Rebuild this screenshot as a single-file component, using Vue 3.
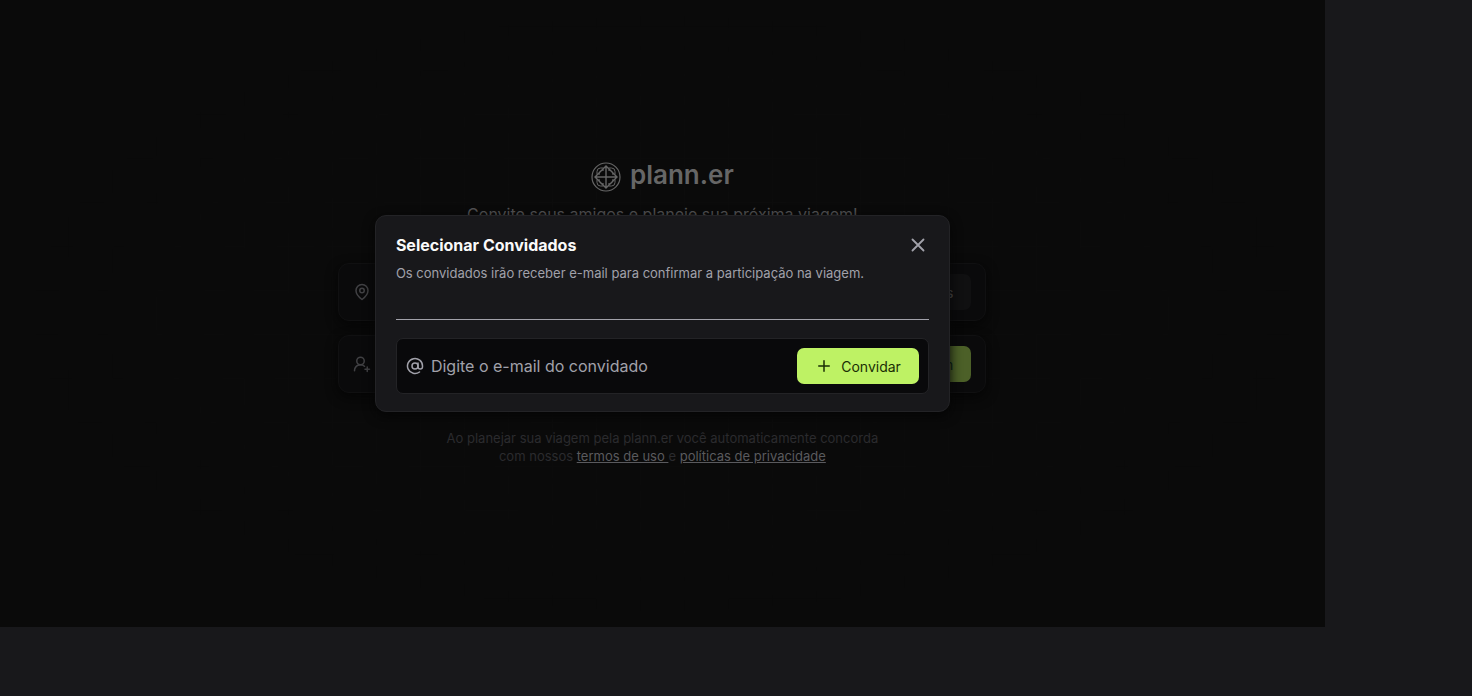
<script setup>
import { ref } from 'vue'

const email = ref('')
const logoAngles = [0, 90, 180, 270]
</script>

<template>
  <div class="screen">
    <div class="frame">
      <main class="page">
        <header class="intro">
          <div class="brand">
            <svg class="brand-mark" viewBox="0 0 30 30" fill="none" stroke="currentColor" aria-hidden="true">
              <circle cx="15" cy="15" r="14" stroke-width="1.2" />
              <path d="M15 4 26 15 15 26 4 15ZM15 4v22M4 15h22" stroke-width="1.4" />
              <path
                v-for="angle in logoAngles"
                :key="angle"
                d="M6 12.5V9.5Q6 6 9.5 6h3M8 13Q8 8 13 8"
                :transform="`rotate(${angle} 15 15)`"
              />
            </svg>
            <span class="brand-name">plann.er</span>
          </div>
          <p class="tagline">Convite seus amigos e planeje sua próxima viagem!</p>
        </header>

        <div class="steps">
          <div class="step">
            <svg class="icon" viewBox="0 0 24 24" aria-hidden="true">
              <path d="M20 10c0 6-8 12-8 12s-8-6-8-12a8 8 0 0 1 16 0Z" />
              <circle cx="12" cy="10" r="3" />
            </svg>
            <button class="step-button" type="button" tabindex="-1">Alterar local/datas</button>
          </div>
          <div class="step">
            <svg class="icon" viewBox="0 0 24 24" aria-hidden="true">
              <path d="M2 21a8 8 0 0 1 13.3-6" />
              <circle cx="10" cy="8" r="5" />
              <path d="M19 16v6M22 19h-6" />
            </svg>
            <button class="step-button confirm" type="button" tabindex="-1">Confirmar viagem</button>
          </div>
        </div>

        <p class="legal">
          Ao planejar sua viagem pela plann.er você automaticamente concorda<br />
          com nossos <a href="#termos">termos de uso&nbsp;</a>e <a href="#privacidade">políticas de privacidade</a>
        </p>
      </main>

      <div class="overlay">
        <section class="modal" role="dialog" aria-modal="true" aria-labelledby="guests-title">
          <div class="modal-head">
            <h2 id="guests-title">Selecionar Convidados</h2>
            <button class="close" type="button" aria-label="Fechar">
              <svg class="icon" viewBox="0 0 24 24" aria-hidden="true"><path d="M18 6 6 18M6 6l12 12" /></svg>
            </button>
          </div>
          <p class="hint">Os convidados irão receber e-mail para confirmar a participação na viagem.</p>
          <hr class="divider" />
          <form class="invite" @submit.prevent>
            <label for="guest-email" aria-label="E-mail do convidado">
              <svg class="icon" viewBox="0 0 24 24" aria-hidden="true">
                <circle cx="12" cy="12" r="4" />
                <path d="M16 8v5a3 3 0 0 0 6 0v-1a10 10 0 1 0-4 8" />
              </svg>
            </label>
            <input id="guest-email" v-model="email" type="email" placeholder="Digite o e-mail do convidado" />
            <button class="invite-button" type="submit">
              <svg class="icon" viewBox="0 0 24 24" aria-hidden="true"><path d="M5 12h14M12 5v14" /></svg>
              Convidar
            </button>
          </form>
        </section>
      </div>
    </div>
  </div>
</template>

<style>
body {
  background: #18181b;
}
</style>

<style scoped>
.screen {
  min-height: 100vh;
  font-family: Inter, "Liberation Sans", sans-serif;
  color: #a1a1aa;
}

.screen * {
  box-sizing: border-box;
}

.frame {
  position: relative;
  display: flex;
  align-items: center;
  justify-content: center;
  width: 90vw;
  min-height: calc(90vh + 1px);
  background: #0a0a0a;
}

.frame::before {
  content: "";
  position: absolute;
  inset: 0;
  background:
    linear-gradient(90deg, #0d0d0d 1px, transparent 1px) 24px 0 / 44px 44px,
    linear-gradient(#0d0d0d 1px, transparent 1px) 0 26px / 44px 44px;
  mask-image: radial-gradient(closest-side, #000, transparent 95%);
}

p,
h2 {
  margin: 0;
}

button,
input {
  border: 0;
  font: inherit;
}

.icon {
  display: block;
  width: 18px;
  height: 18px;
  flex: none;
  fill: none;
  stroke: currentColor;
  stroke-width: 2;
  stroke-linecap: round;
  stroke-linejoin: round;
}

.page {
  position: relative;
  display: flex;
  flex-direction: column;
  gap: 36px;
  width: 100%;
  max-width: 648px;
  padding-bottom: 4px;
  text-align: center;
}

.intro {
  display: flex;
  flex-direction: column;
  align-items: center;
  gap: 10px;
}

.brand {
  display: flex;
  align-items: flex-end;
  gap: 9px;
  color: #666;
}

.brand-mark {
  width: 30px;
  height: 30px;
}

.brand-name {
  font-size: 26px;
  font-weight: 600;
  line-height: 34px;
}

.tagline {
  font-size: 16px;
  line-height: 25px;
  color: #525254;
}

.steps {
  display: flex;
  flex-direction: column;
  gap: 14px;
}

.step {
  display: flex;
  align-items: center;
  justify-content: space-between;
  height: 58px;
  padding: 0 14px;
  border: 1px solid #101011;
  border-radius: 11px;
  background: #0a0a0b;
  box-shadow: 0 4px 12px #050505;
  color: #414144;
}

.step-button {
  height: 36px;
  padding: 0 18px;
  border-radius: 7px;
  background: #101011;
  color: #505052;
  font-size: 14px;
}

.confirm {
  background: #4c6028;
  color: #0b2418;
}

.legal {
  font-size: 13px;
  line-height: 18px;
  color: #2b2b2e;
}

.legal a {
  color: #5a5a5e;
}

.overlay {
  position: absolute;
  inset: 0;
  display: flex;
  align-items: center;
  justify-content: center;
}

.modal {
  width: 575px;
  max-width: 100%;
  padding: 17px 20px;
  border: 1px solid #232326;
  border-radius: 11px;
  background: #18181b;
  box-shadow: 0 4px 12px #050505;
}

.modal-head {
  display: flex;
  align-items: center;
  justify-content: space-between;
}

.modal-head h2 {
  font-size: 16px;
  font-weight: 700;
  line-height: 24px;
  color: #fafafa;
}

.close {
  padding: 0;
  background: none;
  color: #a1a1aa;
}

.close .icon {
  width: 22px;
  height: 22px;
}

.hint {
  margin-top: 7px;
  font-size: 13px;
  line-height: 18px;
}

.divider {
  height: 1px;
  margin: 37px 0 18px;
  border: 0;
  background: #a1a1aa;
}

.invite {
  display: flex;
  align-items: center;
  height: 56px;
  padding: 0 9px;
  border: 1px solid #232326;
  border-radius: 7px;
  background: #09090b;
}

.invite input {
  flex: 1;
  min-width: 0;
  padding: 0 7px;
  background: none;
  color: #d4d4d8;
  font-size: 16px;
  outline: none;
}

.invite input::placeholder {
  color: #a1a1aa;
}

.invite-button {
  display: flex;
  align-items: center;
  gap: 8px;
  height: 36px;
  padding: 0 18px;
  border-radius: 7px;
  background: #bef264;
  color: #1a2e05;
  font-size: 14px;
}
</style>
